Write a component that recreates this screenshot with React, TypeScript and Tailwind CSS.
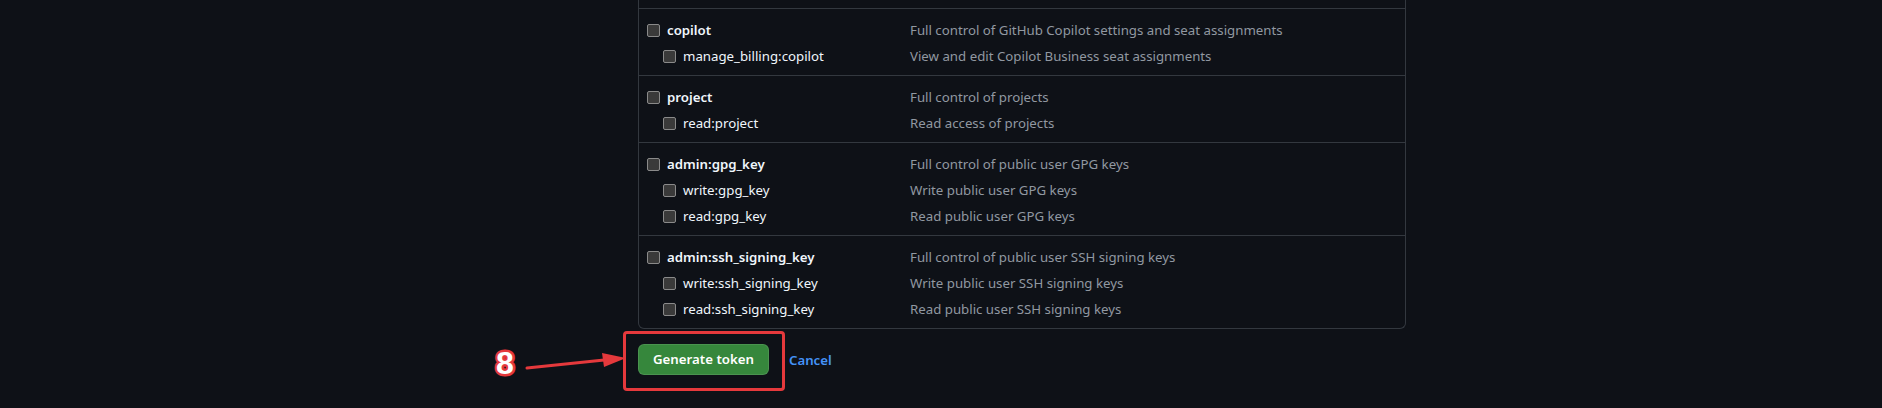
import React from "react";

type Scope = {
  name: string;
  desc: string;
  subs: [string, string][];
};

const scopes: Scope[] = [
  {
    name: "copilot",
    desc: "Full control of GitHub Copilot settings and seat assignments",
    subs: [["manage_billing:copilot", "View and edit Copilot Business seat assignments"]],
  },
  {
    name: "project",
    desc: "Full control of projects",
    subs: [["read:project", "Read access of projects"]],
  },
  {
    name: "admin:gpg_key",
    desc: "Full control of public user GPG keys",
    subs: [
      ["write:gpg_key", "Write public user GPG keys"],
      ["read:gpg_key", "Read public user GPG keys"],
    ],
  },
  {
    name: "admin:ssh_signing_key",
    desc: "Full control of public user SSH signing keys",
    subs: [
      ["write:ssh_signing_key", "Write public user SSH signing keys"],
      ["read:ssh_signing_key", "Read public user SSH signing keys"],
    ],
  },
];

function Checkbox() {
  return (
    <span className="w-[13px] h-[13px] shrink-0 rounded-[2px] bg-[#3a3a3a] border border-[#8a8a8a]" />
  );
}

function Row({ label, desc, sub }: { label: string; desc: string; sub?: boolean }) {
  return (
    <div className="flex items-center h-[26px]">
      <div
        className={`w-[271px] shrink-0 flex items-center gap-[7px] ${
          sub ? "pl-[24px] text-[#f0f6fc]" : "pl-[8px] font-semibold text-[#f0f6fc]"
        }`}
      >
        <Checkbox />
        <span className="pt-px">{label}</span>
      </div>
      <div className="pt-px text-[#9198a1]">{desc}</div>
    </div>
  );
}

export default function App() {
  return (
    <div className="w-full h-[408px] overflow-hidden bg-[#0e1117] text-[13.25px] font-['Noto_Sans','Open_Sans',sans-serif]">
      <div className="ml-[638px] w-[768px]">
        <div className="border-x border-b border-[#33383f] rounded-b-md pt-[8px]">
          {scopes.map((s) => (
            <div key={s.name} className="border-t border-[#33383f] pt-[8px] pb-[6px]">
              <Row label={s.name} desc={s.desc} />
              {s.subs.map(([l, d]) => (
                <Row key={l} label={l} desc={d} sub />
              ))}
            </div>
          ))}
        </div>

        <div className="relative mt-[2px] flex items-center">
          <span className="absolute left-[-142px] top-[16px] text-[32px] leading-none font-bold text-white font-['Liberation_Sans',sans-serif] [paint-order:stroke_fill] [-webkit-text-stroke:5px_#e5393c]">
            8
          </span>
          <svg
            className="absolute left-[-113px] top-[20px]"
            width="104"
            height="20"
            viewBox="0 0 104 20"
          >
            <line x1="2" y1="17" x2="84" y2="8.6" stroke="#e5393c" strokeWidth="3" strokeLinecap="round" />
            <polygon points="101,7 77,2 79,16" fill="#e5393c" />
          </svg>
          <div className="-ml-[15px] border-[3px] border-[#e5393c] rounded-[4px] pl-[12px] pr-[13px] pt-[10px] pb-[13px]">
            <button className="h-[31px] px-[14px] rounded-[6px] bg-[#36873c] border border-[#ffffff1a] text-white font-semibold">
              Generate token
            </button>
          </div>
          <a className="ml-[4px] text-[#4493f8] font-semibold">Cancel</a>
        </div>
      </div>
    </div>
  );
}
